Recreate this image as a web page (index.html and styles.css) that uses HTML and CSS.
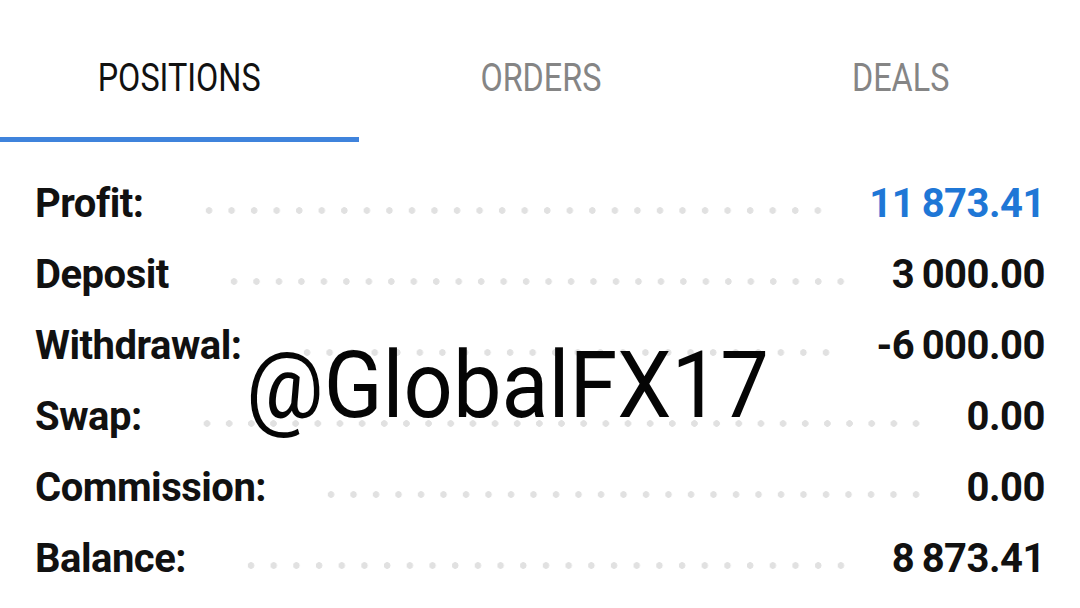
FILE: index.html
```html
<!DOCTYPE html>
<html>
<head>
<title>Trade</title>
<meta charset="utf-8">
<link rel="stylesheet" href="styles.css">
</head>
<body>
  <div class="tabs">
    <div class="tab active"><span>POSITIONS</span></div>
    <div class="tab"><span>ORDERS</span></div>
    <div class="tab"><span>DEALS</span></div>
  </div>

  <div class="summary">
    <div class="row"><span class="label">Profit:</span><span class="dots"></span><span class="value blue">11 873.41</span></div>
    <div class="row"><span class="label">Deposit</span><span class="dots"></span><span class="value">3 000.00</span></div>
    <div class="row"><span class="label">Withdrawal:</span><span class="dots"></span><span class="value">-6 000.00</span></div>
    <div class="row"><span class="label">Swap:</span><span class="dots"></span><span class="value">0.00</span></div>
    <div class="row"><span class="label">Commission:</span><span class="dots"></span><span class="value">0.00</span></div>
    <div class="row"><span class="label">Balance:</span><span class="dots"></span><span class="value">8 873.41</span></div>

    <div class="mark">@GlobalFX17</div>
  </div>
</body>
</html>
```

FILE: styles.css
```css
body {margin: 0; background: #fff; font-family: Roboto, "Liberation Sans", sans-serif; color: #111;}

.tabs {display: flex;}
.tab {flex: 1; height: 142px; padding-top: 55px; box-sizing: border-box;
      text-align: center; font-size: 39px; line-height: 46px; color: #858585;
      border-bottom: 5px solid transparent;
}
.tab span {display: inline-block; transform: scaleX(0.83);}
.tab.active {color: #111; border-bottom-color: #3f83dc; margin-right: 2px;}

.summary {position: relative; padding-top: 26px;}
.row {display: flex; height: 71px; line-height: 71px; padding: 0 35px 0 35px;
      font-size: 40px; font-weight: bold; letter-spacing: -0.5px;
}
.dots {flex: 1; align-self: flex-end; height: 7px; margin: 0 40px 25px 54px;
       background: radial-gradient(circle, #e1e1e1 3px, transparent 3.6px);
       background-size: 22px 7px; background-repeat: space no-repeat;
}
.value {text-align: right; word-spacing: -2px;}
.blue {color: #1f77d6;}

/* watermark over the table */
.mark {position: absolute; left: 246px; top: 198px;
       font-size: 92px; line-height: 1; font-weight: normal; color: #050505;
       transform: scaleX(0.94); transform-origin: left center;
}
```
